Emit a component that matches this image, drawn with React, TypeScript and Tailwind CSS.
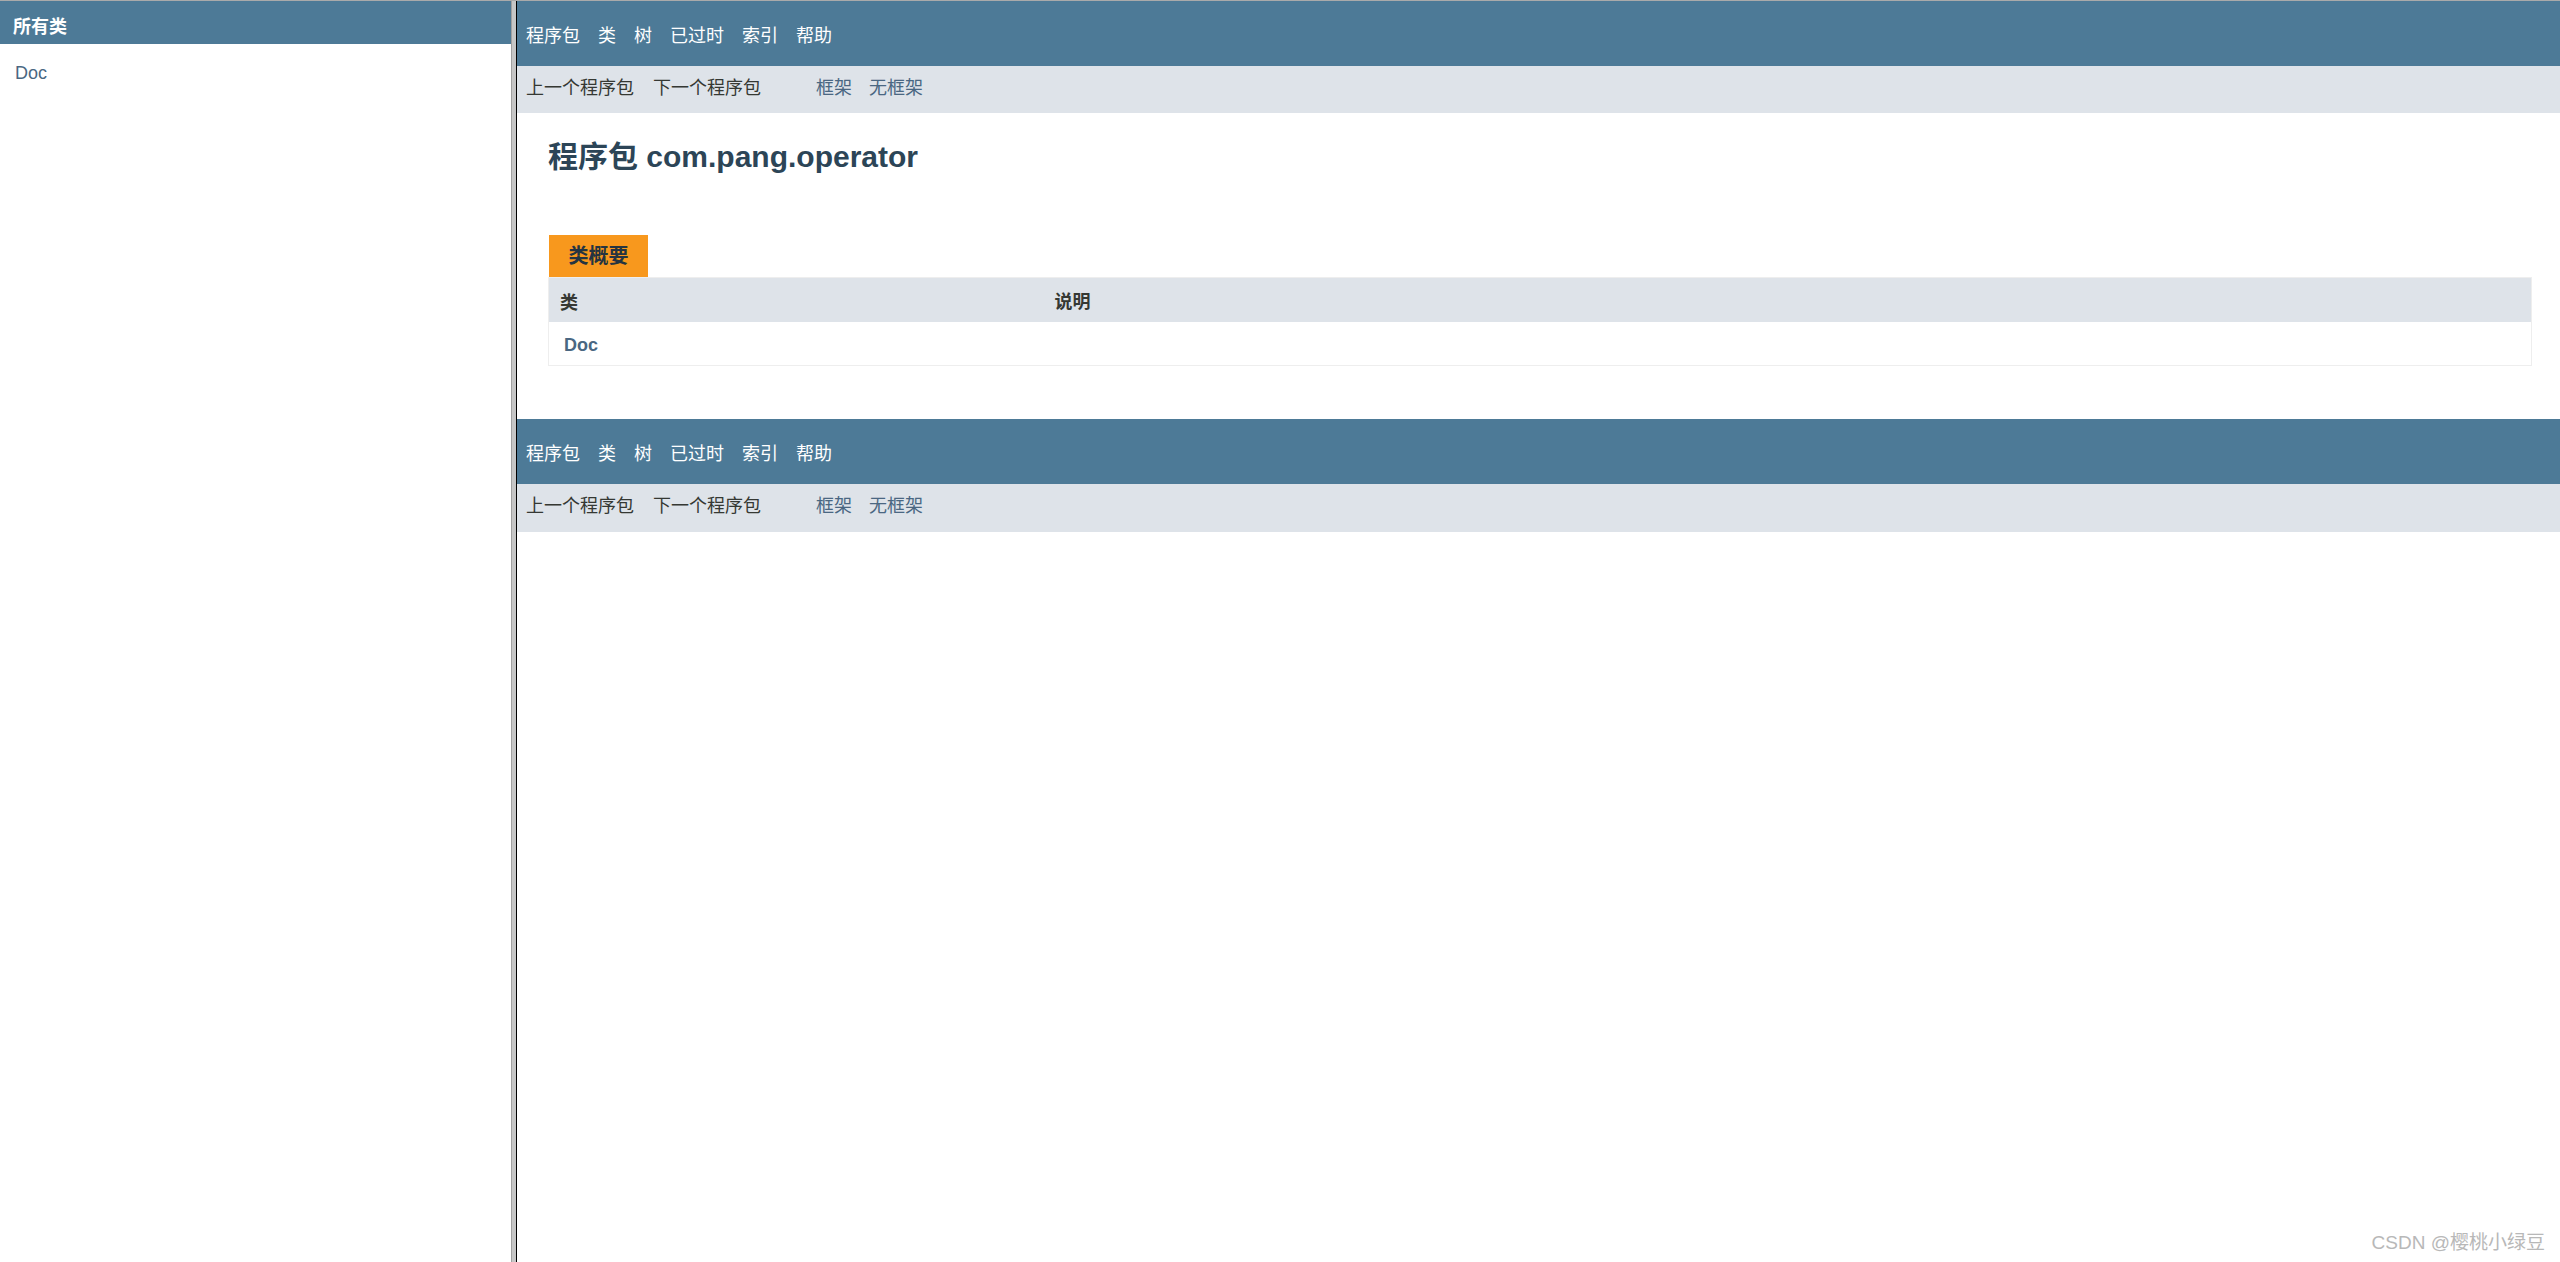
const font = { fontFamily: '"Liberation Sans", "Noto Sans CJK SC", sans-serif' };

function TopNav() {
  return (
    <div className="h-[65px] bg-[#4d7a97] flex items-start pt-[24px] pl-[9px] gap-[18px] text-[18px] leading-[22px] text-white">
      <span>程序包</span>
      <span>类</span>
      <span>树</span>
      <span>已过时</span>
      <span>索引</span>
      <span>帮助</span>
    </div>
  );
}

function SubNav({ tall }: { tall?: boolean }) {
  return (
    <div
      className={`${tall ? "h-[47px]" : "h-[48px]"} bg-[#dee3e9] flex items-center pb-[4px] pl-[9px] text-[18px] leading-[22px]`}
    >
      <span className="text-[#353833]">上一个程序包</span>
      <span className="text-[#353833] ml-[19px]">下一个程序包</span>
      <span className="text-[#4a6782] ml-[55px]">框架</span>
      <span className="text-[#4a6782] ml-[17px]">无框架</span>
    </div>
  );
}

export default function App() {
  return (
    <div className="relative w-full h-[1262px] flex border-t border-[#aaaaaa] bg-white overflow-hidden" style={font}>
      {/* LEFT FRAME */}
      <div className="w-[511px] shrink-0 flex flex-col">
        <div className="h-[43px] bg-[#4d7a97] pl-[13px] pt-[15px] text-[18px] leading-[22px] font-bold text-white">
          所有类
        </div>
        <div className="pl-[15px] mt-[18px] text-[18px] leading-[22px] text-[#4a6782]">Doc</div>
      </div>
      {/* END LEFT FRAME */}

      {/* DIVIDER */}
      <div className="w-[5px] shrink-0 bg-[#c6c6c6] border-l border-[#a0a0a0]" />
      <div className="w-[1px] shrink-0 bg-black" />

      {/* RIGHT FRAME */}
      <div className="flex-1 flex flex-col min-w-0">
        <TopNav />
        <SubNav tall />

        <div className="pl-[31px] pr-[28px]">
          <h1 className="mt-[26px] text-[30px] leading-[36px] font-bold text-[#2c4557]">程序包 com.pang.operator</h1>

          <div className="mt-[60px] ml-[1px] w-[99px] h-[42px] bg-[#f8981d] flex items-center justify-center text-[20px] font-bold text-[#253441]">
            类概要
          </div>

          <div className="border border-[#eeeeee]">
            <div className="grid grid-cols-[25%_1fr] h-[44px] bg-[#dee3e9] items-center text-[18px] font-bold text-[#353833]">
              <div className="pl-[11px] pt-[6px]">类</div>
              <div className="pl-[10px] pt-[4px]">说明</div>
            </div>
            <div className="grid grid-cols-[25%_1fr] h-[43px] items-center text-[18px] font-bold">
              <div className="pl-[15px] pt-[3px] text-[#4a6782]">Doc</div>
              <div />
            </div>
          </div>
        </div>

        <div className="mt-[53px]">
          <TopNav />
          <SubNav />
        </div>
      </div>
      {/* END RIGHT FRAME */}

      <div className="absolute right-[15px] bottom-[8px] text-[19px] leading-[22px] text-[#b8b8b8] [text-shadow:0_0_1px_#ffffff]">
        CSDN @樱桃小绿豆
      </div>
    </div>
  );
}
